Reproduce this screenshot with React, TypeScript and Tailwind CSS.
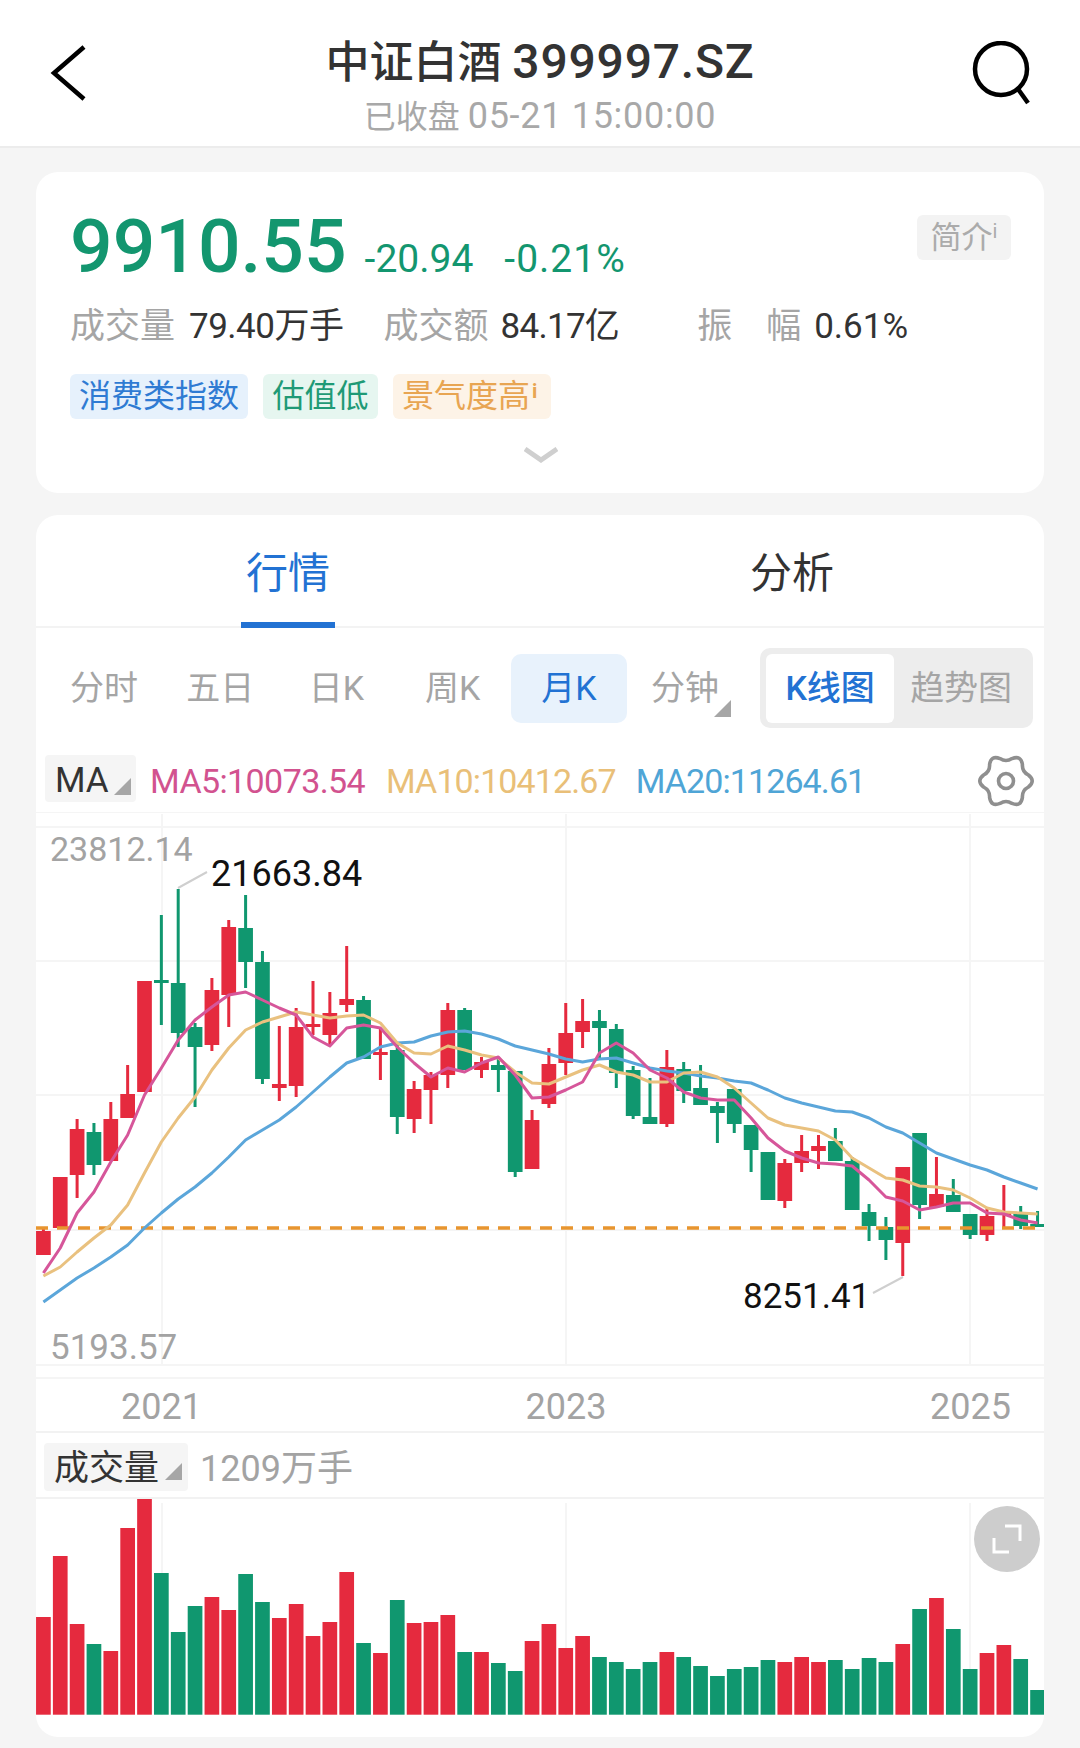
const RED = "#e52a3e"
const GREEN = "#10976f"

// top, bottom, wick top, wick bottom, volume top, up?
const candles: [number, number, number, number, number, boolean][] = [
  [1231, 1255, 1227, 1255, 1617, true],
  [1177, 1228, 1177, 1228, 1556, true],
  [1129, 1175, 1119, 1198, 1624, true],
  [1132, 1165, 1123, 1175, 1644, false],
  [1119, 1161, 1102, 1161, 1651, true],
  [1094, 1118, 1065, 1118, 1528, true],
  [981, 1092, 981, 1092, 1499, true],
  [980, 983, 915, 1025, 1573, false],
  [983, 1033, 889, 1047, 1632, false],
  [1027, 1047, 1023, 1107, 1606, false],
  [990, 1045, 978, 1051, 1597, true],
  [927, 995, 920, 1027, 1610, true],
  [928, 962, 895, 988, 1574, false],
  [962, 1079, 951, 1084, 1602, false],
  [1084, 1088, 1026, 1101, 1618, true],
  [1027, 1086, 1008, 1097, 1604, true],
  [1024, 1027, 981, 1035, 1636, true],
  [1013, 1035, 992, 1045, 1622, true],
  [999, 1005, 946, 1012, 1572, true],
  [1000, 1059, 996, 1059, 1643, false],
  [1052, 1055, 1028, 1080, 1653, true],
  [1050, 1117, 1043, 1134, 1600, false],
  [1089, 1119, 1081, 1133, 1623, true],
  [1075, 1090, 1072, 1124, 1622, true],
  [1010, 1075, 1003, 1088, 1615, true],
  [1010, 1070, 1008, 1070, 1652, false],
  [1062, 1070, 1057, 1078, 1652, true],
  [1065, 1070, 1057, 1092, 1663, false],
  [1071, 1172, 1071, 1177, 1671, false],
  [1120, 1169, 1110, 1169, 1641, true],
  [1064, 1104, 1048, 1108, 1624, true],
  [1033, 1063, 1003, 1075, 1648, true],
  [1021, 1032, 999, 1048, 1636, true],
  [1021, 1028, 1010, 1060, 1657, false],
  [1029, 1073, 1024, 1088, 1662, false],
  [1070, 1116, 1066, 1119, 1669, false],
  [1117, 1124, 1078, 1124, 1662, false],
  [1067, 1124, 1050, 1127, 1652, true],
  [1069, 1091, 1062, 1103, 1657, false],
  [1088, 1105, 1065, 1105, 1666, false],
  [1106, 1113, 1102, 1143, 1676, false],
  [1089, 1124, 1089, 1133, 1669, false],
  [1125, 1150, 1125, 1172, 1667, false],
  [1152, 1200, 1152, 1200, 1660, false],
  [1163, 1201, 1159, 1208, 1662, true],
  [1151, 1163, 1135, 1172, 1657, true],
  [1146, 1151, 1135, 1169, 1662, true],
  [1141, 1161, 1128, 1161, 1660, false],
  [1161, 1210, 1157, 1210, 1669, false],
  [1212, 1226, 1204, 1241, 1658, false],
  [1227, 1240, 1217, 1260, 1662, false],
  [1167, 1243, 1167, 1276, 1644, true],
  [1133, 1205, 1133, 1219, 1609, false],
  [1194, 1207, 1157, 1207, 1598, true],
  [1195, 1212, 1179, 1212, 1629, false],
  [1214, 1235, 1214, 1239, 1669, false],
  [1216, 1235, 1208, 1241, 1653, true],
  [1213, 1215, 1185, 1227, 1645, true],
  [1213, 1226, 1206, 1229, 1659, false],
  [1224, 1227, 1211, 1227, 1690, false],
]

const ma5 = [1273, 1248, 1213, 1192, 1162, 1135, 1095, 1068, 1040, 1020, 1007, 995, 992, 1000, 1008, 1015, 1037, 1046, 1028, 1025, 1028, 1047, 1063, 1077, 1068, 1072, 1063, 1057, 1075, 1098, 1097, 1090, 1082, 1053, 1043, 1053, 1070, 1078, 1092, 1098, 1100, 1100, 1118, 1138, 1151, 1158, 1163, 1164, 1166, 1180, 1197, 1201, 1210, 1207, 1203, 1203, 1213, 1214, 1220, 1223]
const ma10 = [1276, 1267, 1252, 1238, 1225, 1205, 1173, 1142, 1118, 1097, 1070, 1048, 1030, 1022, 1017, 1012, 1015, 1018, 1016, 1015, 1023, 1043, 1053, 1054, 1046, 1050, 1055, 1058, 1072, 1083, 1084, 1077, 1070, 1065, 1072, 1075, 1082, 1082, 1073, 1072, 1077, 1088, 1103, 1118, 1125, 1128, 1131, 1140, 1158, 1168, 1178, 1180, 1186, 1187, 1190, 1198, 1208, 1212, 1213, 1214]
const ma20 = [1302, 1290, 1278, 1268, 1257, 1245, 1228, 1213, 1199, 1187, 1173, 1157, 1140, 1130, 1120, 1107, 1092, 1077, 1063, 1057, 1047, 1043, 1042, 1036, 1032, 1031, 1034, 1039, 1046, 1050, 1054, 1059, 1062, 1059, 1058, 1063, 1068, 1071, 1073, 1076, 1078, 1081, 1083, 1090, 1098, 1103, 1107, 1111, 1112, 1118, 1127, 1133, 1143, 1153, 1159, 1165, 1170, 1177, 1183, 1189]

const centerX = (i: number) => 43.4 + 16.85 * i
const toPoints = (values: number[]) => values.map((y, i) => `${centerX(i)},${y}`).join(" ")

const periods = ["分时", "五日", "日K", "周K", "月K", "分钟"]

const polar = (r: number, deg: number) => {
  const a = (deg * Math.PI) / 180
  return `${(r * Math.cos(a)).toFixed(2)} ${(r * Math.sin(a)).toFixed(2)}`
}

// six rounded teeth, wave through alternating radii
const gearPath = () => {
  const mid = 23.2
  let d = `M${polar(mid, -15)}`
  for (let k = 0; k < 12; k++) {
    const angle = k * 30
    d += ` Q${polar(k % 2 === 0 ? 30 : 18.5, angle)} ${polar(mid, angle + 15)}`
  }
  return d + "Z"
}

const Corner = ({ className }: { className: string }) => (
  <svg viewBox="0 0 10 10" className={className}>
    <polygon points="10,0 10,10 0,10" fill="#a6a6a6" />
  </svg>
)

const App = () => {
  return (
    <div className="w-[1080px] h-[1748px] overflow-hidden bg-[#f5f5f5] font-['Roboto','Noto_Sans_CJK_SC',sans-serif]">

      {/* HEADER */}
      <div className="h-[148px] bg-white border-b-2 border-[#ececec] flex items-start justify-between pl-[50px] pr-[48px]">
        <svg viewBox="0 0 38 56" className="w-[38px] h-[56px] mt-[45px] mr-[20px]" fill="none" stroke="#000" strokeWidth="4.5">
          <path d="M34 2 L4 28 L34 54" />
        </svg>
        <div className="flex flex-col items-center pt-[34px]">
          <div className="h-[56px] leading-[56px] text-[44px] font-medium text-[#333] whitespace-nowrap">
            中证白酒 <span className="text-[48px] tracking-[0.8px]">399997.SZ</span>
          </div>
          <div className="h-[42px] mt-[5px] leading-[42px] text-[32px] text-[#a8a8a8] whitespace-nowrap">
            已收盘 <span className="text-[36px] tracking-[0.7px]">05-21 15:00:00</span>
          </div>
        </div>
        <svg viewBox="0 0 60 64" className="w-[60px] h-[64px] mt-[41px]" fill="none" stroke="#000" strokeWidth="4.5">
          <circle cx="29" cy="28" r="26" />
          <path d="M46 48 L56 62" />
        </svg>
      </div>

      {/* QUOTE CARD */}
      <div className="mt-[24px] mx-[36px] h-[321px] rounded-[22px] bg-white pl-[34px] pr-[33px]">
        <div className="flex items-start justify-between pt-[32px]">
          <div className="flex items-baseline text-[#13966f] h-[84px] leading-[84px]">
            <span className="text-[75px] font-medium">9910.55</span>
            <span className="ml-[18px] text-[39px]">-20.94</span>
            <span className="ml-[31px] text-[39px] tracking-[1px]">-0.21%</span>
          </div>
          <div className="mt-[11px] w-[94px] h-[45px] rounded-[6px] bg-[#f3f3f3] text-[#ababab] text-[31px] leading-[45px] text-center whitespace-nowrap">
            简介<span className="relative -top-[10px] text-[20px]">i</span>
          </div>
        </div>

        <div className="mt-[14px] flex items-center h-[50px] text-[35px] whitespace-nowrap">
          <span className="text-[#a5a5a5]">成交量</span>
          <span className="ml-[14px] tracking-[-0.5px] text-[#333]">79.40万手</span>
          <span className="ml-[40px] text-[#a5a5a5]">成交额</span>
          <span className="ml-[12px] tracking-[-0.7px] text-[#333]">84.17亿</span>
          <span className="ml-[78px] text-[#a5a5a5]">振</span>
          <span className="ml-[34px] text-[#a5a5a5]">幅</span>
          <span className="ml-[13px] text-[#333]">0.61%</span>
        </div>

        <div className="mt-[22px] flex gap-[15px] text-[32px] leading-[45px] whitespace-nowrap">
          <span className="w-[178px] h-[45px] rounded-[6px] bg-[#e6f1fc] text-[#2f7bd3] text-center">消费类指数</span>
          <span className="w-[115px] h-[45px] rounded-[6px] bg-[#e6f6f0] text-[#1f9a76] text-center">估值低</span>
          <span className="w-[158px] h-[45px] rounded-[6px] bg-[#fdf3e7] text-[#e8a552] pl-[9px]">
            景气度高<span className="relative -top-[9px] left-[2px] text-[20px] font-bold">i</span>
          </span>
        </div>

        <svg viewBox="0 0 34 16" className="mx-auto mt-[28px] w-[34px] h-[16px]" fill="none" stroke="#cfcfcf" strokeWidth="5">
          <path d="M1 2 L17 13 L33 2" />
        </svg>
      </div>

      {/* CHART CARD */}
      <div className="mt-[22px] mx-[36px] h-[1222px] rounded-[22px] bg-white overflow-hidden">

        {/* TABS */}
        <div className="h-[113px] grid grid-cols-2 border-b-2 border-[#f3f3f3]">
          <div className="flex flex-col items-center">
            <div className="h-[111px] pt-[8px] leading-[101px] text-[42px] text-[#2272d3]">行情</div>
            <div className="w-[94px] h-[6px] -mt-[4px] bg-[#2272d3]" />
          </div>
          <div className="h-[111px] pt-[8px] leading-[101px] text-[42px] text-center text-[#333]">分析</div>
        </div>

        {/* PERIODS */}
        <div className="pt-[20px] pl-[10px] h-[107px] flex items-start">
          <div className="flex items-center h-[80px]">
            {periods.map((p) => (
              <div key={p} className={`relative w-[116.2px] h-[69px] rounded-[10px] text-[34px] leading-[69px] text-center ${p === "月K" ? "bg-[#e8f2fc] text-[#2272d3]" : "text-[#a5a5a5]"}`}>
                {p}
                {p === "分钟" && <Corner className="absolute left-[87px] top-[46px] w-[17px] h-[17px]" />}
              </div>
            ))}
          </div>
          <div className="ml-[17px] w-[273px] h-[80px] rounded-[10px] bg-[#ededed] flex items-center pl-[6px] text-[34px]">
            <div className="w-[128px] h-[69px] rounded-[6px] bg-white text-center leading-[69px] font-medium text-[#2272d3]">K线图</div>
            <div className="w-[134px] text-center leading-[69px] text-[#a5a5a5]">趋势图</div>
          </div>
        </div>

        {/* MA LEGEND */}
        <div className="pt-[20px] h-[77px] pl-[9px] pr-[10px] flex items-start text-[34px] leading-[53px] whitespace-nowrap">
          <div className="relative w-[91px] h-[47px] rounded-[4px] bg-[#f5f5f5] pl-[10px] text-[35px] leading-[51px] text-[#333]">
            MA
            <Corner className="absolute left-[69px] top-[23px] w-[17px] h-[17px]" />
          </div>
          <span className="ml-[14px] tracking-[-0.6px] text-[#d2528f]">MA5:10073.54</span>
          <span className="ml-[21px] tracking-[-0.9px] text-[#e9bf78]">MA10:10412.67</span>
          <span className="ml-[20px] tracking-[-0.9px] text-[#4fa5d6]">MA20:11264.61</span>
          <svg viewBox="-28 -28 56 56" className="ml-auto -mt-[2px] w-[56px] h-[56px]" fill="none" stroke="#8f8f8f" strokeWidth="3.6">
            <path d={gearPath()} />
            <circle r="7.5" />
          </svg>
        </div>

        {/* CANDLES */}
        <div className="relative h-[567px] text-[34px] leading-[40px] whitespace-nowrap">
          <svg viewBox="36 812 1009 567" className="w-[1009px] h-[567px] block">
            {[812, 827, 961, 1095, 1230, 1365, 1378].map((y) => (
              <line key={y} x1="36" x2="1045" y1={y} y2={y} stroke="#f5f5f5" strokeWidth="2" />
            ))}
            {[162, 566, 970].map((x) => (
              <line key={x} x1={x} x2={x} y1="814" y2="1365" stroke="#f5f5f5" strokeWidth="2" />
            ))}
            {candles.map(([top, bottom, wickTop, wickBottom, , up], i) => (
              <g key={i} fill={up ? RED : GREEN}>
                <rect x={centerX(i) - 1.5} y={wickTop} width="3" height={wickBottom - wickTop} />
                <rect x={centerX(i) - 7.35} y={top} width="14.7" height={bottom - top} />
              </g>
            ))}
            <line x1="36" x2="1045" y1="1228" y2="1228" stroke="#e8952f" strokeWidth="3.5" strokeDasharray="12 9" />
            <g fill="none" strokeWidth="3" strokeLinejoin="round">
              <polyline points={toPoints(ma20)} stroke="#5ba6da" />
              <polyline points={toPoints(ma10)} stroke="#e9c17f" />
              <polyline points={toPoints(ma5)} stroke="#d6569a" />
            </g>
            <path d="M178 888 L207 872 M873 1293 L903 1277" stroke="#cfcfcf" strokeWidth="2" fill="none" />
          </svg>
          <span className="absolute left-[14px] top-[17px] text-[#a3a3a3]">23812.14</span>
          <span className="absolute left-[175px] top-[42px] text-[36px] text-[#111]">21663.84</span>
          <span className="absolute left-[707px] top-[465px] text-[35px] text-[#111]">8251.41</span>
          <span className="absolute left-[14px] top-[516px] text-[35px] text-[#a3a3a3]">5193.57</span>
        </div>

        {/* YEARS */}
        <div className="h-[54px] pt-[4px] pl-[85px] pr-[33px] flex items-center justify-between text-[36px] text-[#a3a3a3] border-b-2 border-[#f2f2f2]">
          <span>2021</span>
          <span>2023</span>
          <span>2025</span>
        </div>

        {/* VOLUME */}
        <div className="h-[66px] pt-[10px] pl-[8px] flex items-start text-[35px] leading-[52px] whitespace-nowrap border-b-2 border-[#f2f2f2]">
          <div className="relative w-[144px] h-[48px] rounded-[4px] bg-[#f5f5f5] pl-[10px] text-[#333]">
            成交量
            <Corner className="absolute left-[121px] top-[20px] w-[17px] h-[17px]" />
          </div>
          <span className="ml-[12px] text-[36px] text-[#a3a3a3]">1209万手</span>
        </div>

        <div className="relative h-[238px]">
          <svg viewBox="36 1499 1009 238" className="w-[1009px] h-[238px] block">
            {[162, 566, 970].map((x) => (
              <line key={x} x1={x} x2={x} y1="1503" y2="1715" stroke="#f5f5f5" strokeWidth="2" />
            ))}
            {candles.map(([, , , , volTop, up], i) => (
              <rect key={i} x={centerX(i) - 7.35} y={volTop} width="14.7" height={1714.7 - volTop} fill={up ? RED : GREEN} />
            ))}
          </svg>
          <div className="absolute left-[938px] top-[7px] w-[66px] h-[66px] rounded-full bg-[#cdcdcd] flex items-center justify-center">
            <svg viewBox="0 0 30 30" className="w-[30px] h-[30px]" fill="none" stroke="#fff" strokeWidth="3">
              <path d="M13 2 L28 2 L28 17 M2 14 L2 28 L17 28" />
            </svg>
          </div>
        </div>
      </div>
    </div>
  )
}

export default App
